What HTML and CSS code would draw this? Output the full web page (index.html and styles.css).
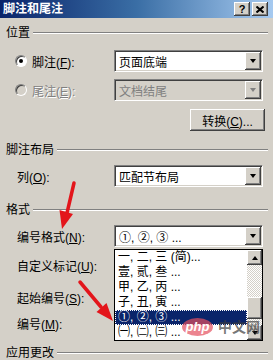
FILE: index.html
```html
<!DOCTYPE html>
<html lang="zh-CN">

<head>
  <meta charset="UTF-8" />
  <meta name="viewport" content="width=device-width, initial-scale=1.0" />
  <title>脚注和尾注</title>
  <link rel="stylesheet" href="styles.css">
</head>

<body>
  <div class="dialog">
    <div class="titlebar">
      <span class="title">脚注和尾注</span>
      <div class="title-btns">
        <span class="tbtn">?</span>
        <span class="tbtn">
          <svg width="8" height="7" viewBox="0 0 8 7"><path d="M0.5 0.5 L7.5 6.5 M7.5 0.5 L0.5 6.5" stroke="#000" stroke-width="2"/></svg>
        </span>
      </div>
    </div>

    <div class="content">
      <div class="group g-pos"><span>位置</span></div>

      <div class="row r-foot">
        <label class="radio-label"><span class="radio checked"></span><span>脚注(<u>F</u>):</span></label>
        <div class="combo"><span class="combo-text">页面底端</span><span class="drop"><i></i></span></div>
      </div>

      <div class="row r-end">
        <label class="radio-label disabled"><span class="radio"></span><span>尾注(<u>E</u>):</span></label>
        <div class="combo off"><span class="combo-text">文档结尾</span><span class="drop"><i></i></span></div>
      </div>

      <div class="btn-row">
        <button class="btn">转换(<u>C</u>)...</button>
      </div>

      <div class="group g-layout"><span>脚注布局</span></div>

      <div class="row r-cols">
        <label class="lbl">列(<u>O</u>):</label>
        <div class="combo"><span class="combo-text">匹配节布局</span><span class="drop"><i></i></span></div>
      </div>

      <div class="group g-format"><span>格式</span></div>

      <div class="row r-numfmt">
        <label class="lbl">编号格式(<u>N</u>):</label>
        <div class="combo"><span class="combo-text">①, ②, ③ ...</span><span class="drop"><i></i></span></div>
      </div>

      <div class="row r-custom">
        <label class="lbl">自定义标记(<u>U</u>):</label>
      </div>

      <div class="row r-start">
        <label class="lbl">起始编号(<u>S</u>):</label>
      </div>

      <div class="row r-num">
        <label class="lbl">编号(<u>M</u>):</label>
      </div>

      <div class="group g-apply"><span>应用更改</span></div>
    </div>

    <!-- open dropdown of 编号格式 -->
    <div class="droplist">
      <ul class="items">
        <li>一, 二, 三 (简)...</li>
        <li>壹, 贰, 叁 ...</li>
        <li>甲, 乙, 丙 ...</li>
        <li>子, 丑, 寅 ...</li>
        <li class="selected">①, ②, ③ ...</li>
        <li>㈠, ㈡, ㈢ ...</li>
      </ul>
      <div class="scrollbar">
        <span class="sb-btn"><i class="up"></i></span>
        <span class="sb-track t1"></span>
        <span class="sb-thumb"></span>
        <span class="sb-track t2"></span>
        <span class="sb-btn"><i class="down"></i></span>
      </div>
    </div>

    <div class="watermark">
      <span class="wm-php">php</span>
      <span class="wm-cn">中文网</span>
    </div>

    <svg class="arrows" width="273" height="360" viewBox="0 0 273 360">
      <line x1="74" y1="183" x2="67" y2="213" stroke="#e3151b" stroke-width="3.5" stroke-linecap="round"/>
      <polygon points="59.5,210 73,214 62,229" fill="#e3151b"/>
      <line x1="80" y1="282" x2="101" y2="307" stroke="#e3151b" stroke-width="3.5" stroke-linecap="round"/>
      <polygon points="106.5,303 96.5,312 113,321" fill="#e3151b"/>
    </svg>
  </div>
</body>

</html>
```

FILE: styles.css
```css
body {
  margin: 0;
  background: #d4d0c8;
  font-family: "Liberation Sans", "Noto Sans CJK SC", sans-serif;
  font-size: 12px;
  color: #000;
}

.dialog {
  position: relative;
  width: 273px;
  height: 360px;
  overflow: hidden;
}

/* title bar */
.titlebar {
  height: 18px;
  display: flex;
  align-items: center;
  justify-content: space-between;
  padding: 0 5px 0 3px;
  background: linear-gradient(90deg, #0a246a 0%, #3a6ea5 50%, #a6caf0 100%);
}

.title {
  color: #fff;
  font-weight: bold;
  font-size: 12px;
  line-height: 18px;
}

.title-btns {
  display: flex;
  gap: 2px;
}

.tbtn {
  width: 16px;
  height: 14px;
  box-sizing: border-box;
  display: flex;
  align-items: center;
  justify-content: center;
  background: #d4d0c8;
  box-shadow: inset -1px -1px #404040, inset 1px 1px #fff, inset -2px -2px #808080;
  font: bold 11px "Liberation Sans", sans-serif;
  color: #000;
}

/* content */
.content {
  display: flex;
  flex-direction: column;
  padding: 0 5px 0 6px;
}

.group {
  display: flex;
  align-items: center;
  gap: 3px;
  height: 14px;
  line-height: 14px;
}

.group::after {
  content: "";
  flex: 1;
  border-top: 1px solid #808080;
  border-bottom: 1px solid #fff;
}

.g-pos { margin-top: 8px; }
.g-layout { margin-top: 12px; }
.g-format { margin-top: 16px; }
.g-apply { margin-top: 12px; }

.row {
  display: grid;
  grid-template-columns: 108px 149px;
  align-items: center;
  height: 22px;
}

.r-foot { margin-top: 10px; }
.r-end { margin-top: 7px; }
.r-cols { margin-top: 8px; }
.r-numfmt { margin-top: 8px; }
.r-custom { margin-top: 7px; }
.r-start { margin-top: 10px; }
.r-num { margin-top: 4px; }

.lbl {
  padding-left: 11px;
  white-space: nowrap;
}

.radio-label {
  display: flex;
  align-items: center;
  gap: 5px;
  padding-left: 9px;
  white-space: nowrap;
}

.radio-label.disabled {
  color: #808080;
  text-shadow: 1px 1px #fff;
}

.radio {
  position: relative;
  width: 12px;
  height: 12px;
  box-sizing: border-box;
  border-radius: 50%;
  background: #fff;
  border: 1px solid;
  border-color: #808080 #fff #fff #808080;
  box-shadow: inset 1px 1px #404040;
}

.disabled .radio {
  background: #d4d0c8;
}

.radio.checked::after {
  content: "";
  position: absolute;
  left: 3px;
  top: 3px;
  width: 4px;
  height: 4px;
  border-radius: 50%;
  background: #000;
}

/* combo boxes */
.combo {
  height: 22px;
  box-sizing: border-box;
  display: flex;
  align-items: center;
  background: #fff;
  border: 1px solid;
  border-color: #808080 #fff #fff #808080;
  box-shadow: inset 1px 1px #404040, inset -1px -1px #d4d0c8;
  padding: 1px;
}

.combo.off {
  background: #d4d0c8;
  color: #808080;
}

.combo-text {
  flex: 1;
  padding-left: 3px;
  white-space: nowrap;
}

.drop {
  width: 16px;
  height: 18px;
  box-sizing: border-box;
  display: flex;
  align-items: center;
  justify-content: center;
  background: #d4d0c8;
  box-shadow: inset -1px -1px #404040, inset 1px 1px #fff, inset -2px -2px #808080;
}

.drop i {
  width: 0;
  height: 0;
  border-left: 3.5px solid transparent;
  border-right: 3.5px solid transparent;
  border-top: 4px solid #000;
}

.off .drop i {
  border-top-color: #808080;
}

/* button */
.btn-row {
  display: flex;
  justify-content: flex-end;
  margin-top: 8px;
  padding-right: 3px;
}

.btn {
  width: 75px;
  height: 22px;
  padding: 0;
  border: none;
  background: #d4d0c8;
  box-shadow: inset -1px -1px #404040, inset 1px 1px #fff, inset -2px -2px #808080;
  font-family: inherit;
  font-size: 12px;
  color: #000;
}

/* open list */
.droplist {
  position: absolute;
  left: 114px;
  top: 249px;
  width: 149px;
  height: 92px;
  box-sizing: border-box;
  display: flex;
  background: #fff;
  border: 1px solid #000;
}

.items {
  flex: 1;
  margin: 0;
  padding: 0;
  list-style: none;
  overflow: hidden;
}

.items li {
  height: 15px;
  line-height: 15px;
  padding-left: 3px;
  white-space: nowrap;
  font-size: 12px;
}

.items li.selected {
  background: #0a246a;
  color: #fff;
  outline: 1px dotted #fff;
  outline-offset: -1px;
}

.scrollbar {
  width: 15px;
  display: flex;
  flex-direction: column;
}

.sb-btn,
.sb-thumb {
  box-sizing: border-box;
  background: #d4d0c8;
  box-shadow: inset -1px -1px #404040, inset 1px 1px #fff, inset -2px -2px #808080;
}

.sb-btn {
  height: 15px;
  display: flex;
  align-items: center;
  justify-content: center;
}

.sb-btn i {
  width: 0;
  height: 0;
  border-left: 3.5px solid transparent;
  border-right: 3.5px solid transparent;
}

.sb-btn i.up {
  border-bottom: 4px solid #000;
}

.sb-btn i.down {
  border-top: 4px solid #000;
}

.sb-track {
  background: repeating-conic-gradient(#fff 0 25%, #d4d0c8 0 50%) 0 0 / 2px 2px;
}

.t1 { height: 32px; }
.t2 { flex: 1; }

.sb-thumb {
  height: 22px;
}

/* watermark */
.watermark {
  position: absolute;
  left: 182px;
  top: 318px;
  display: flex;
  align-items: center;
  gap: 5px;
}

.wm-php {
  width: 31px;
  height: 18px;
  border-radius: 50%;
  background: rgba(228, 80, 95, 0.7);
  color: #fff;
  font: italic bold 13px "Liberation Sans", sans-serif;
  line-height: 18px;
  text-align: center;
}

.wm-cn {
  color: rgba(60, 60, 60, 0.7);
  font-size: 14px;
  font-weight: bold;
  line-height: 18px;
}

.arrows {
  position: absolute;
  left: 0;
  top: 0;
  pointer-events: none;
}
```
